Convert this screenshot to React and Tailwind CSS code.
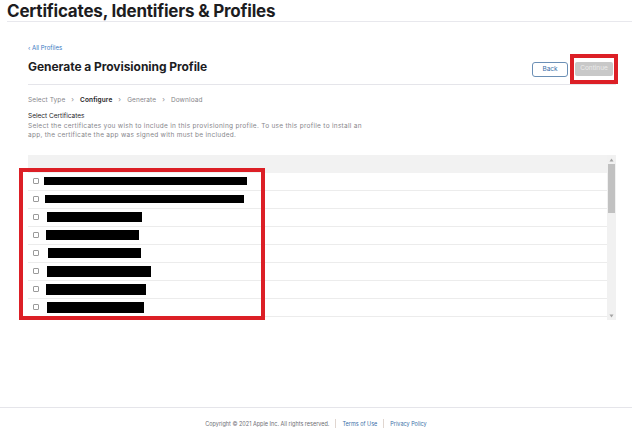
import React from "react";

const bars = [
  { ml: 16, w: 203, h: 8 },
  { ml: 17, w: 199, h: 8 },
  { ml: 19, w: 95, h: 10 },
  { ml: 18, w: 93, h: 10 },
  { ml: 20, w: 93, h: 10 },
  { ml: 19, w: 104, h: 11 },
  { ml: 18, w: 100, h: 11 },
  { ml: 19, w: 97, h: 11 },
  { ml: 19, w: 90, h: 11 },
];

function Chevron() {
  return <span className="mx-[6px] text-[7px] text-[#8a8a8e]">›</span>;
}

export default function App() {
  return (
    <div
      className="flex h-[438px] w-[632px] flex-col overflow-hidden bg-white text-[#1d1d1f]"
      style={{ fontFamily: "Inter, 'Noto Sans', sans-serif" }}
    >
      <header className="ml-[7px] h-[22px] border-b border-[#e8e8ed]">
        <h1 className="pt-[1px] text-[17px] font-bold leading-[20px] tracking-[-0.2px]">
          Certificates, Identifiers &amp; Profiles
        </h1>
      </header>

      <main className="flex-1 pl-[28px] pr-[16px]">
        <div className="mt-[22px] text-[6px] leading-[8px] text-[#3a78c2]">‹ All Profiles</div>

        <div className="relative flex items-start justify-between">
          <h2 className="mt-[5px] text-[12px] font-bold leading-[20px] tracking-[-0.05px]">
            Generate a Provisioning Profile
          </h2>
          <div className="mt-[10px] mr-[3px] flex gap-[7px]">
            <button className="flex h-[15px] w-[36px] items-center justify-center rounded-[3px] border border-[#6b8fb5] text-[6.5px] text-[#3a6fa8]">
              Back
            </button>
            <div className="relative">
              <button className="flex h-[14px] w-[38px] items-center justify-center rounded-[2px] bg-[#c8c8c8] text-[6.5px] text-[#ececec]">
                Continue
              </button>
              <div className="absolute left-[-5px] top-[-8px] h-[30px] w-[48px] border-[4px] border-[#dc1f26]" />
            </div>
          </div>
        </div>

        <div className="mt-[7px] border-t border-[#e5e5ea]" />

        <div className="mt-[10px] flex items-center text-[6.5px] leading-[10px] tracking-[0.1px] text-[#86868b]">
          <span>Select Type</span>
          <Chevron />
          <span className="font-semibold text-[#1d1d1f]">Configure</span>
          <Chevron />
          <span>Generate</span>
          <Chevron />
          <span>Download</span>
        </div>

        <div className="mt-[7px] text-[6.5px] leading-[9.5px]">
          <div className="text-[#1d1d1f]">Select Certificates</div>
          <div className="tracking-[0.28px] text-[#86868b]">
            Select the certificates you wish to include in this provisioning profile. To use this profile to install an
            <br />
            app, the certificate the app was signed with must be included.
          </div>
        </div>

        <div className="relative mt-[14px] flex h-[165px]">
          <div className="flex-1 overflow-hidden">
            <div className="h-[18px] bg-[#f2f2f2]" />
            {bars.map((b, i) => (
              <div key={i} className="flex h-[18px] items-center border-b border-[#ececec]">
                <div className="ml-[5px] h-[6px] w-[6px] shrink-0 rounded-[1px] border border-[#9a9a9a] bg-white" />
                <div className="bg-black" style={{ marginLeft: b.ml - 11, width: b.w, height: b.h }} />
              </div>
            ))}
          </div>
          <div className="relative flex w-[9px] flex-col items-center bg-[#f1f1f1]">
            <svg width="5" height="4" viewBox="0 0 5 4" className="mt-[3px]">
              <path d="M2.5 0.5 L4.5 3.5 L0.5 3.5 Z" fill="#a3a3a3" />
            </svg>
            <div className="mt-[2px] h-[49px] w-[7px] bg-[#c1c1c1]" />
            <div className="flex-1" />
            <svg width="5" height="4" viewBox="0 0 5 4" className="mb-[2px]">
              <path d="M0.5 0.5 L4.5 0.5 L2.5 3.5 Z" fill="#a3a3a3" />
            </svg>
          </div>
          <div className="absolute left-[-9px] top-[13px] h-[152px] w-[246px] border-[4px] border-[#dc1f26]" />
        </div>
      </main>

      <footer className="h-[31px] border-t border-[#e5e5ea]">
        <div className="mt-[11px] flex items-center justify-center text-[5.5px] leading-[8px]">
          <span className="text-[#6e6e73]">Copyright © 2021 Apple Inc. All rights reserved.</span>
          <span className="mx-[6px] h-[9px] border-l border-[#e0d6d0]" />
          <span className="text-[#3a6fa8]">Terms of Use</span>
          <span className="mx-[6px] h-[9px] border-l border-[#e0d6d0]" />
          <span className="text-[#3a6fa8]">Privacy Policy</span>
        </div>
      </footer>
    </div>
  );
}
